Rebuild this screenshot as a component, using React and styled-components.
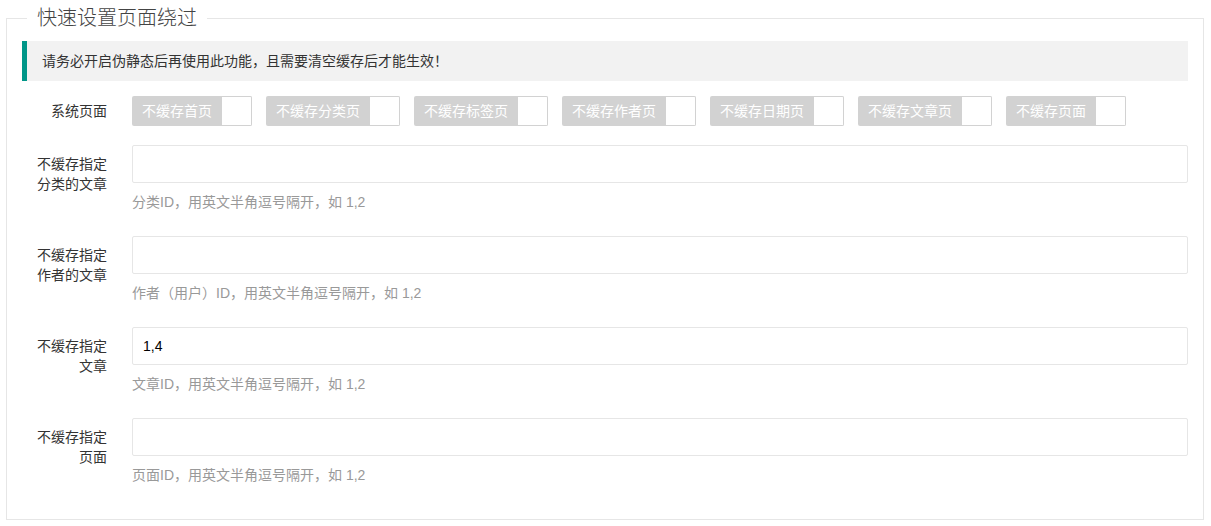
import React from 'react'
import styled, { createGlobalStyle } from 'styled-components'

const GlobalStyle = createGlobalStyle`
  html, body {
    margin: 0;
    padding: 0;
    background: #fff;
  }
  body {
    font-family: "Liberation Sans", "Noto Sans CJK SC", sans-serif;
    font-size: 14px;
    color: #333;
  }
  * {
    box-sizing: border-box;
  }
`

const Page = styled.div`
  padding: 8px 7px 0 6px;
`

const FieldSet = styled.fieldset`
  margin: 0;
  padding: 13px 15px 10px;
  border: 1px solid #e6e6e6;
  min-width: 0;
`

// legend sits after the fieldset padding, so 5 + 15 = 20px from the border
const Legend = styled.legend`
  margin-left: 5px;
  padding: 0 10px;
  font-size: 20px;
  line-height: 20px;
  font-weight: 300;
  color: #444;
`

const Notice = styled.div`
  margin-bottom: 11px;
  padding: 9px 15px;
  line-height: 22px;
  background: #f2f2f2;
  border-left: 5px solid #009688;
  color: #333;
`

const FormItem = styled.div`
  display: flex;
  align-items: flex-start;
  margin-bottom: 15px;
`

const Label = styled.label`
  flex: 0 0 110px;
  width: 110px;
  padding: 9px 25px 9px 15px;
  line-height: 20px;
  text-align: right;
  color: #333;
`

const Block = styled.div`
  flex: 1;
  min-width: 0;
`

const CheckRow = styled.div`
  display: flex;
  flex-wrap: wrap;
  gap: 14px;
  padding-top: 4px;
  min-height: 38px;
`

const Check = styled.div`
  display: flex;
  height: 30px;
  line-height: 30px;
  border-radius: 2px;
  background: #d2d2d2;
  cursor: pointer;
`

const CheckText = styled.span`
  padding: 0 10px;
  color: #fff;
  white-space: nowrap;
`

const CheckBox = styled.span`
  width: 30px;
  background: #fff;
  border: 1px solid #d2d2d2;
  border-left: none;
  border-radius: 0 2px 2px 0;
`

const Input = styled.input`
  display: block;
  width: 100%;
  height: 38px;
  padding: 0 10px;
  border: 1px solid #e6e6e6;
  border-radius: 2px;
  background: #fff;
  font-family: inherit;
  font-size: 14px;
  color: #000;
  outline: none;
`

const Aux = styled.div`
  padding: 9px 0;
  line-height: 20px;
  color: #999;
`

const pages = ['不缓存首页', '不缓存分类页', '不缓存标签页', '不缓存作者页', '不缓存日期页', '不缓存文章页', '不缓存页面']

const fields = [
  { label: '不缓存指定分类的文章', value: '', tip: '分类ID，用英文半角逗号隔开，如 1,2' },
  { label: '不缓存指定作者的文章', value: '', tip: '作者（用户）ID，用英文半角逗号隔开，如 1,2' },
  { label: '不缓存指定文章', value: '1,4', tip: '文章ID，用英文半角逗号隔开，如 1,2' },
  { label: '不缓存指定页面', value: '', tip: '页面ID，用英文半角逗号隔开，如 1,2' },
]

export default function App() {
  return (
    <Page>
      <GlobalStyle />
      <FieldSet>
        <Legend>快速设置页面绕过</Legend>
        <Notice>请务必开启伪静态后再使用此功能，且需要清空缓存后才能生效！</Notice>
        <FormItem>
          <Label>系统页面</Label>
          <Block>
            <CheckRow>
              {pages.map((p) => (
                <Check key={p}>
                  <CheckText>{p}</CheckText>
                  <CheckBox />
                </Check>
              ))}
            </CheckRow>
          </Block>
        </FormItem>
        {fields.map((f, i) => (
          <FormItem key={i}>
            <Label>{f.label}</Label>
            <Block>
              <Input defaultValue={f.value} />
              <Aux>{f.tip}</Aux>
            </Block>
          </FormItem>
        ))}
      </FieldSet>
    </Page>
  )
}
